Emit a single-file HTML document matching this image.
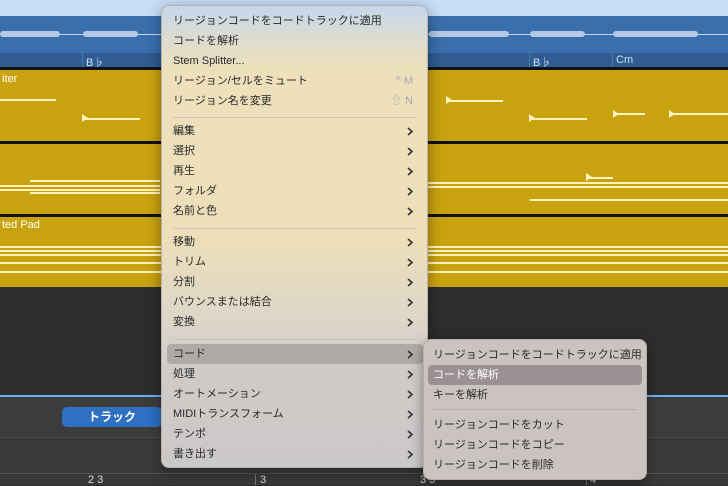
<!DOCTYPE html><html><head><meta charset="utf-8"><style>
*{margin:0;padding:0;box-sizing:border-box}
body{width:728px;height:485px;overflow:hidden;position:relative;background:#2d2d2d;font-family:"Liberation Sans","Noto Sans CJK JP",sans-serif}
.a{position:absolute}
.mi{position:absolute;left:11px;font-size:11px;color:#2a2a2a;line-height:20px;height:20px;width:250px;white-space:nowrap}
.ch{position:absolute;right:10px;top:6px;width:6px;height:9px}
.sh{position:absolute;right:10px;top:0;color:#aaa;font-size:11px}
.sep{position:absolute;left:11px;width:244px;height:1px;background:#c9c3b8}
.line{position:absolute;height:1.5px;background:#fff3c0}
.tri{position:absolute;width:0;height:0;border-top:4px solid transparent;border-bottom:4px solid transparent;border-left:6px solid #fff3c0}
</style></head><body>
<div class="a" style="left:0;top:0;width:728px;height:16px;background:#c6ddf6"></div>
<div class="a" style="left:0;top:16px;width:728px;height:37px;background:#3a6fad"></div>
<div class="a" style="left:0;top:34px;width:728px;height:1px;background:#c6d6ea"></div>
<div class="a" style="left:0;top:31px;width:60px;height:6px;background:#b5c9e2;border-radius:3px"></div>
<div class="a" style="left:83px;top:31px;width:55px;height:6px;background:#b5c9e2;border-radius:3px"></div>
<div class="a" style="left:429px;top:31px;width:80px;height:6px;background:#b5c9e2;border-radius:3px"></div>
<div class="a" style="left:530px;top:31px;width:55px;height:6px;background:#b5c9e2;border-radius:3px"></div>
<div class="a" style="left:613px;top:31px;width:85px;height:6px;background:#b5c9e2;border-radius:3px"></div>
<div class="a" style="left:0;top:53px;width:728px;height:14px;background:#2e5c93"></div>
<div class="a" style="left:82px;top:53px;width:1px;height:14px;background:#4b77aa"></div>
<div class="a" style="left:529px;top:53px;width:1px;height:14px;background:#4b77aa"></div>
<div class="a" style="left:612px;top:53px;width:1px;height:14px;background:#4b77aa"></div>
<div class="a" style="left:86px;top:54px;color:#cfe0f5;font-size:11px">B♭</div>
<div class="a" style="left:533px;top:54px;color:#cfe0f5;font-size:11px">B♭</div>
<div class="a" style="left:616px;top:54px;color:#cfe0f5;font-size:11px">Cm</div>
<div class="a" style="left:0;top:67px;width:728px;height:3px;background:#111"></div>
<div class="a" style="left:0;top:70px;width:728px;height:71px;background:#c9a30f"></div>
<div class="a" style="left:0;top:141px;width:728px;height:3px;background:#111"></div>
<div class="a" style="left:0;top:144px;width:728px;height:70px;background:#c9a30f"></div>
<div class="a" style="left:0;top:214px;width:728px;height:3px;background:#111"></div>
<div class="a" style="left:0;top:217px;width:728px;height:70px;background:#c9a30f"></div>
<div class="a" style="left:2px;top:73px;color:#fff;font-size:11px">iter</div>
<div class="a" style="left:2px;top:219px;color:#fff;font-size:11px">ted Pad</div>
<div class="line" style="left:0;top:99px;width:56px"></div>
<div class="tri" style="left:82px;top:114px"></div><div class="line" style="left:84px;top:118px;width:56px"></div>
<div class="tri" style="left:446px;top:96px"></div><div class="line" style="left:448px;top:100px;width:55px"></div>
<div class="tri" style="left:529px;top:114px"></div><div class="line" style="left:531px;top:118px;width:56px"></div>
<div class="tri" style="left:613px;top:110px"></div><div class="line" style="left:615px;top:113px;width:30px"></div>
<div class="tri" style="left:669px;top:110px"></div><div class="line" style="left:671px;top:113px;width:57px"></div>
<div class="line" style="left:0;top:185px;width:160px;box-shadow:0 4px 0 #fff3c0"></div>
<div class="line" style="left:30px;top:180px;width:130px;box-shadow:0 12px 0 #fff3c0"></div>
<div class="line" style="left:428px;top:182px;width:300px;box-shadow:0 4px 0 #fff3c0"></div>
<div class="line" style="left:530px;top:199px;width:198px"></div>
<div class="tri" style="left:586px;top:173px"></div><div class="line" style="left:588px;top:177px;width:25px"></div>
<div class="line" style="left:0;top:246px;width:728px;box-shadow:0 4px 0 #fff3c0,0 8px 0 #fff3c0,0 16px 0 #fff3c0"></div>
<div class="line" style="left:0;top:271px;width:728px"></div>
<div class="a" style="left:0;top:395px;width:728px;height:2px;background:#6eaef0"></div>
<div class="a" style="left:0;top:397px;width:728px;height:40px;background:#3c3c3c"></div>
<div class="a" style="left:62px;top:407px;width:100px;height:20px;background:#2f70c2;border-radius:5px;color:#fff;font-size:12px;font-weight:bold;text-align:center;line-height:20px">トラック</div>
<div class="a" style="left:0;top:437px;width:728px;height:36px;background:#3a3a3a;border-top:1px solid #4a4a4a"></div>
<div class="a" style="left:0;top:473px;width:728px;height:12px;background:#383838;border-top:1px solid #555"></div>
<div class="a" style="left:88px;top:474px;color:#ddd;font-size:11px">2 3</div>
<div class="a" style="left:255px;top:474px;width:1px;height:11px;background:#777"></div>
<div class="a" style="left:260px;top:474px;color:#ddd;font-size:11px">3</div>
<div class="a" style="left:420px;top:474px;color:#ddd;font-size:11px">3 3</div>
<div class="a" style="left:586px;top:474px;width:1px;height:11px;background:#777"></div>
<div class="a" style="left:590px;top:474px;color:#ddd;font-size:11px">4</div>

<div class="a" style="left:161px;top:5px;width:267px;height:463px;border-radius:8px;border:1px solid #b8b2a8;background:linear-gradient(180deg,#c3d7ea 0%,#d9dcd4 6%,#ede0bb 14%,#eddfb9 50%,#ddd6c9 68%,#cfcbc8 78%,#cbc8c8 100%);box-shadow:0 4px 14px rgba(0,0,0,.4)">
<div class="mi" style="top:5px">リージョンコードをコードトラックに適用</div>
<div class="mi" style="top:25px">コードを解析</div>
<div class="mi" style="top:45px">Stem Splitter...</div>
<div class="mi" style="top:65px">リージョン/セルをミュート<span class="sh">^ M</span></div>
<div class="mi" style="top:85px">リージョン名を変更<span class="sh">⇧ N</span></div>
<div class="sep" style="top:111px"></div>
<div class="mi" style="top:115px">編集<svg class="ch"><path d="M1 1l4 3.5L1 8" fill="none" stroke="#333" stroke-width="1.6"/></svg></div>
<div class="mi" style="top:135px">選択<svg class="ch"><path d="M1 1l4 3.5L1 8" fill="none" stroke="#333" stroke-width="1.6"/></svg></div>
<div class="mi" style="top:155px">再生<svg class="ch"><path d="M1 1l4 3.5L1 8" fill="none" stroke="#333" stroke-width="1.6"/></svg></div>
<div class="mi" style="top:175px">フォルダ<svg class="ch"><path d="M1 1l4 3.5L1 8" fill="none" stroke="#333" stroke-width="1.6"/></svg></div>
<div class="mi" style="top:195px">名前と色<svg class="ch"><path d="M1 1l4 3.5L1 8" fill="none" stroke="#333" stroke-width="1.6"/></svg></div>
<div class="sep" style="top:222px"></div>
<div class="mi" style="top:226px">移動<svg class="ch"><path d="M1 1l4 3.5L1 8" fill="none" stroke="#333" stroke-width="1.6"/></svg></div>
<div class="mi" style="top:246px">トリム<svg class="ch"><path d="M1 1l4 3.5L1 8" fill="none" stroke="#333" stroke-width="1.6"/></svg></div>
<div class="mi" style="top:266px">分割<svg class="ch"><path d="M1 1l4 3.5L1 8" fill="none" stroke="#333" stroke-width="1.6"/></svg></div>
<div class="mi" style="top:286px">バウンスまたは結合<svg class="ch"><path d="M1 1l4 3.5L1 8" fill="none" stroke="#333" stroke-width="1.6"/></svg></div>
<div class="mi" style="top:306px">変換<svg class="ch"><path d="M1 1l4 3.5L1 8" fill="none" stroke="#333" stroke-width="1.6"/></svg></div>
<div class="sep" style="top:333px"></div>
<div class="a" style="left:5px;top:338px;width:256px;height:20px;background:#aeaaa8;border-radius:4px"></div>
<div class="mi" style="top:338px">コード<svg class="ch"><path d="M1 1l4 3.5L1 8" fill="none" stroke="#333" stroke-width="1.6"/></svg></div>
<div class="mi" style="top:358px">処理<svg class="ch"><path d="M1 1l4 3.5L1 8" fill="none" stroke="#333" stroke-width="1.6"/></svg></div>
<div class="mi" style="top:378px">オートメーション<svg class="ch"><path d="M1 1l4 3.5L1 8" fill="none" stroke="#333" stroke-width="1.6"/></svg></div>
<div class="mi" style="top:398px">MIDIトランスフォーム<svg class="ch"><path d="M1 1l4 3.5L1 8" fill="none" stroke="#333" stroke-width="1.6"/></svg></div>
<div class="mi" style="top:418px">テンポ<svg class="ch"><path d="M1 1l4 3.5L1 8" fill="none" stroke="#333" stroke-width="1.6"/></svg></div>
<div class="mi" style="top:438px">書き出す<svg class="ch"><path d="M1 1l4 3.5L1 8" fill="none" stroke="#333" stroke-width="1.6"/></svg></div>
</div>

<div class="a" style="left:423px;top:339px;width:224px;height:141px;border-radius:8px;background:#cbc3c1;border:1px solid #b5adab;box-shadow:0 4px 12px rgba(0,0,0,.4)">
<div class="a" style="left:4px;top:25px;width:214px;height:20px;background:#9b9192;border-radius:4px"></div>
<div class="mi" style="left:9px;top:5px">リージョンコードをコードトラックに適用</div>
<div class="mi" style="left:9px;top:25px;color:#fff">コードを解析</div>
<div class="mi" style="left:9px;top:45px">キーを解析</div>
<div class="sep" style="left:9px;width:204px;top:69px;background:#b5adab"></div>
<div class="mi" style="left:9px;top:75px">リージョンコードをカット</div>
<div class="mi" style="left:9px;top:95px">リージョンコードをコピー</div>
<div class="mi" style="left:9px;top:115px">リージョンコードを削除</div>
</div>
</body></html>
